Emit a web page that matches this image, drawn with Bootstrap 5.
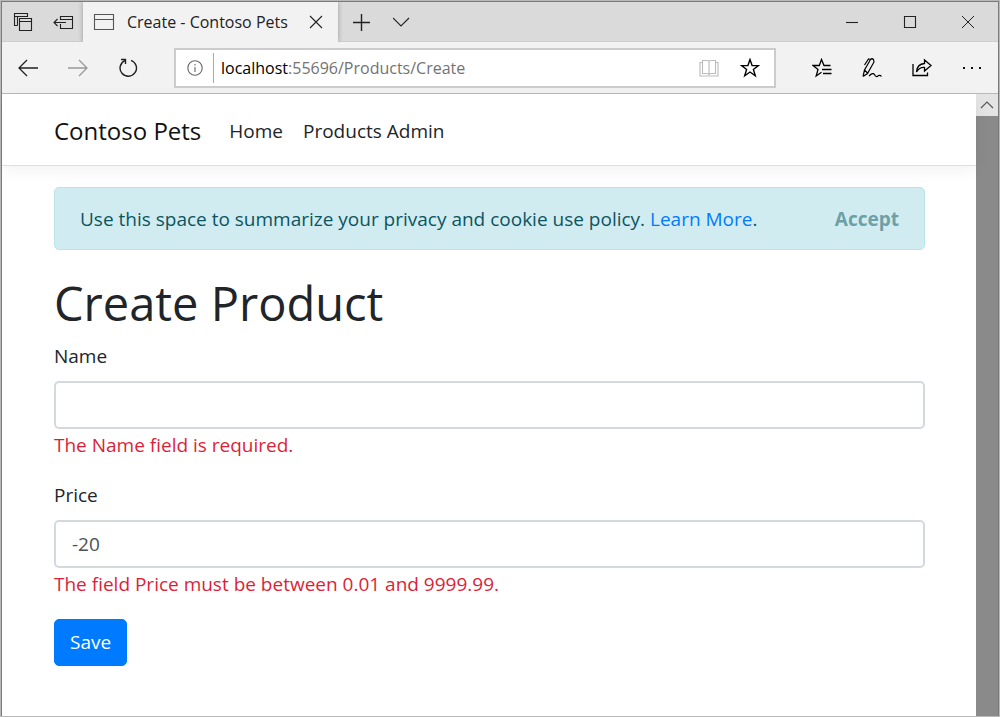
<!DOCTYPE html>
<html lang="en">
<head>
<meta charset="utf-8">
<meta name="viewport" content="width=device-width, initial-scale=1">
<title>Create - Contoso Pets</title>
<link href="https://cdn.jsdelivr.net/npm/bootstrap@5.3.0/dist/css/bootstrap.min.css" rel="stylesheet">
<style>
  body { font-family: "Open Sans", "Noto Sans", sans-serif; font-size: 19px; line-height: 30px; color: #212529; background: #fff; }
  svg { display: block; fill: none; stroke: #222; stroke-width: 1.1; }
  .browser-frame { border: 1px solid #b8b8b8; box-shadow: inset 1px 1px #7b7b7b, inset -1px 0 #7b7b7b; padding: 1px 1px 0; }
  .title-bar { height: 40px; background: #dadada; box-shadow: inset 0 -1px #cecece; font-size: 16px; padding-left: 1px; }
  .tool-button { border: 0; background: transparent; padding: 0; width: 50px; height: 40px; display: flex; align-items: center; justify-content: center; flex: none; }
  .title-bar .tool-button { width: 40px; }
  .title-bar .caption-button { width: 58px; }
  .caption-group { padding-right: 1px; }
  .browser-tab { width: 255px; background: #f2f2f2; padding-left: 10px; box-shadow: 0 0 5px #999; clip-path: inset(0 -5px 0 -5px); color: #222; }
  .browser-tab .tool-button { margin-right: 2px; }
  .toolbar { height: 52px; background: #f2f2f2; border-bottom: 1px solid #b9b9b9; padding: 0 1px; }
  .address-bar { height: 40px; margin: 0 21px; border: 2px solid #ccc; background: #fff; font-size: 16px; }
  .address-bar .tool-button { width: 41px; height: 36px; }
  .address-bar .info-button { width: 37px; }
  .address-text { border-left: 1px solid #aaa; padding-left: 7px; color: #737373; outline: 0; white-space: nowrap; }
  .scroll-track { width: 22px; background: #8a8a8a; }
  .scroll-track .tool-button { width: 22px; height: 22px; background: #e4e4e4; }
  .site-nav { height: 72px; padding: 10px 52px 8px; border-bottom: 1px solid #dcdfe6; box-shadow: 0 5px 15px rgba(0,0,0,.05); }
  .site-nav .navbar-brand { font-size: 24px; margin-right: 20px; color: #111; }
  .site-nav .navbar-nav { gap: 4px; }
  .site-nav .nav-link { padding: 8px; color: #212529; }
  .page-body { padding: 21px 51px 0 52px; }
  .cookie-alert { padding: 0 25px; height: 63px; margin-bottom: 24px; color: #0c5460; background: #d1ecf1; border: 1px solid #b8e4ea; border-radius: 5px; }
  .cookie-alert a { color: #007bff; text-decoration: none; }
  .accept-button { border: 0; background: transparent; padding: 0; font-weight: 700; color: #6d9fa7; }
  h1 { font-size: 47px; line-height: 58px; margin-bottom: 9px; }
  .form-label { display: block; margin-bottom: 10px; }
  .form-control { height: 48px; font-size: 19px; padding: 0 16px; border: 2px solid #d3d9de; border-radius: 5px; color: #495057; }
  .field-group { margin-bottom: 20px; }
  .field-error { color: #dc1f38; padding-top: 1px; }
  .save-button { background: #007bff; border-color: #007bff; font-size: 19px; line-height: 29px; padding: 8px 15px; border-radius: 5px; }
</style>
</head>
<body>
<div class="browser-frame min-vh-100 d-flex flex-column">
  <div class="title-bar d-flex align-items-stretch">
    <button class="tool-button" aria-label="Tabs set aside"><svg width="20" height="20"><path d="M4.500 13.500H1.500V1.500H14.500V5M1.500 4.500H14M4.500 4.500V13.500M6.500 6.500H18.500V18.500H6.500ZM6.500 9.500H18.500"/></svg></button>
    <button class="tool-button" aria-label="Set tabs aside"><svg width="22" height="20"><path d="M8.500 8V4.500H20.500V16.500H8.500V12M8.500 7.500H20.500M2 10.500H14M5.500 7L2 10.500L5.500 14"/></svg></button>
    <div class="browser-tab d-flex align-items-center">
      <svg width="22" height="20" class="flex-shrink-0"><path d="M1.500 2.500H20.500V17.500H1.500ZM1.500 7.500H20.500" stroke="#555"/></svg>
      <span class="flex-grow-1 text-nowrap ps-2 ms-1">Create - Contoso Pets</span>
      <button class="tool-button" aria-label="Close tab"><svg width="14" height="14"><path d="M1 1L13 13M13 1L1 13"/></svg></button>
    </div>
    <button class="tool-button ms-1" aria-label="New tab"><svg width="18" height="18"><path d="M8.500 1V18M0 9.500H17" stroke-width="1.400"/></svg></button>
    <button class="tool-button" aria-label="Tab menu"><svg width="18" height="10"><path d="M0 1L8 9L16 1"/></svg></button>
    <div class="caption-group d-flex ms-auto">
      <button class="tool-button caption-button" aria-label="Minimize"><svg width="14" height="14"><path d="M1 7.500H13"/></svg></button>
      <button class="tool-button caption-button" aria-label="Maximize"><svg width="14" height="14"><path d="M1.500 1.500H12.500V12.500H1.500Z"/></svg></button>
      <button class="tool-button caption-button" aria-label="Close"><svg width="14" height="14"><path d="M1 1L13 13M13 1L1 13" stroke-width="1"/></svg></button>
    </div>
  </div>
  <div class="toolbar d-flex align-items-center">
    <button class="tool-button" aria-label="Back"><svg width="20" height="18"><path d="M1 9H20M9 1L1 9L9 17" stroke-width="1.300"/></svg></button>
    <button class="tool-button" aria-label="Forward" disabled><svg width="20" height="18"><path d="M0 9H19M11 1L19 9L11 17" stroke="#999" stroke-width="1.300"/></svg></button>
    <button class="tool-button" aria-label="Refresh"><svg width="20" height="20"><path d="M13 2.300A8.200 8.200 0 1 1 6.800 2.600M3 1.500H7.500V6" stroke-width="1.400"/></svg></button>
    <div class="address-bar d-flex align-items-center flex-grow-1">
      <button class="tool-button info-button" aria-label="Site information"><svg width="16" height="16"><circle cx="8" cy="8" r="7.200" stroke="#666"/><path d="M8 7V12M8 4V5.500" stroke="#666"/></svg></button>
      <div class="address-text flex-grow-1" role="textbox" contenteditable="true" spellcheck="false" aria-label="Address"><span class="text-black">localhost</span>:55696/Products/Create</div>
      <button class="tool-button" aria-label="Reading view"><svg width="20" height="20"><path d="M3.500 2.500H8Q10 2.500 10 4Q10 2.500 12 2.500H16.500V15.500H12Q10 15.500 10 17Q10 15.500 8 15.500H3.500ZM10 4V17M3.500 4.500H1V18H19V4.500H16.500" stroke="#bbb"/></svg></button>
      <button class="tool-button me-1" aria-label="Add to favorites"><svg width="20" height="20"><path d="M10 1.500L12.100 7.600H18.500L13.400 11.500L15.300 17.800L10 14L4.700 17.800L6.600 11.500L1.500 7.600H7.900Z" stroke-width="1.400" stroke="#000"/></svg></button>
    </div>
    <button class="tool-button" aria-label="Favorites"><svg width="20" height="20"><path d="M18.500 7.500H12L9.500 1.500L7.300 7.500H1L6 11.500L4.200 18L9.500 14.200M10 11.500H19.500M11 15.500H19.500" stroke-width="1.300" stroke="#000"/></svg></button>
    <button class="tool-button" aria-label="Add notes"><svg width="22" height="22"><path d="M2 19.500L3.500 13L9.500 2.500Q11 1 12.500 2.500L13 5L6.500 16.500L2 19.500M9.500 2.500L7.500 2L3.500 8M3.500 13L6.500 16M8 19Q12 15 13.500 17.500Q15 21 17.500 18.500Q19.500 18 20.500 19.500" stroke="#000" stroke-width="1.200"/></svg></button>
    <button class="tool-button" aria-label="Share"><svg width="22" height="20"><path d="M2 6V17.500H16.500V14.500M5.500 14Q6 6 13.500 5.500V2L20 7.500L13.500 13V9.500Q8.500 9 5.500 14Z" stroke="#000" stroke-width="1.300"/></svg></button>
    <button class="tool-button" aria-label="More"><svg width="20" height="6"><path d="M1 3H3M9 3H11M17 3H19" stroke="#111" stroke-width="2"/></svg></button>
  </div>
  <div class="d-flex flex-grow-1">
    <div class="flex-grow-1">
      <nav class="navbar navbar-expand site-nav">
        <a class="navbar-brand" href="#">Contoso Pets</a>
        <div class="navbar-nav">
          <a class="nav-link" href="#">Home</a>
          <a class="nav-link" href="#">Products Admin</a>
        </div>
      </nav>
      <main class="page-body">
        <div class="alert cookie-alert d-flex align-items-center justify-content-between" role="alert">
          <span>Use this space to summarize your privacy and cookie use policy. <a href="#">Learn More</a>.</span>
          <button class="accept-button">Accept</button>
        </div>
        <h1 class="fw-normal">Create Product</h1>
        <form novalidate>
          <div class="field-group">
            <label class="form-label" for="name">Name</label>
            <input class="form-control" id="name" type="text">
            <div class="field-error">The Name field is required.</div>
          </div>
          <div class="field-group">
            <label class="form-label" for="price">Price</label>
            <input class="form-control" id="price" type="text" value="-20">
            <div class="field-error">The field Price must be between 0.01 and 9999.99.</div>
          </div>
          <button class="btn btn-primary save-button" type="submit">Save</button>
        </form>
      </main>
    </div>
    <div class="scroll-track flex-shrink-0">
      <button class="tool-button" aria-label="Scroll up"><svg width="14" height="8"><path d="M1 7L7 1L13 7" stroke="#555"/></svg></button>
    </div>
  </div>
</div>
<script src="https://cdn.jsdelivr.net/npm/bootstrap@5.3.0/dist/js/bootstrap.bundle.min.js"></script>
</body>
</html>
